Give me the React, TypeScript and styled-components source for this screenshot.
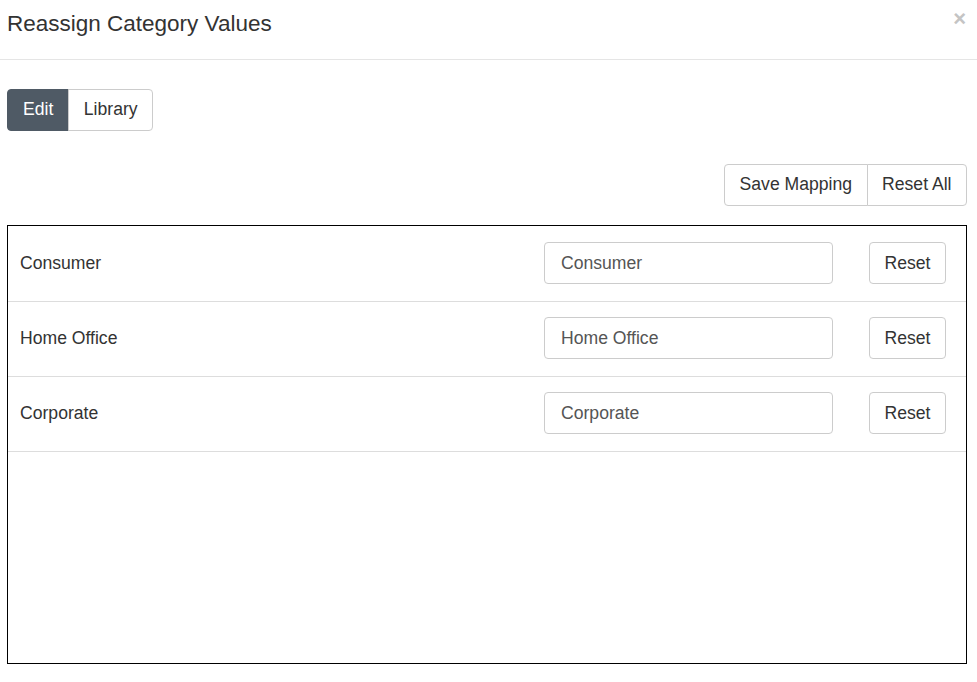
import React from "react";
import styled, { createGlobalStyle } from "styled-components";

const Global = createGlobalStyle`
  html, body { margin: 0; padding: 0; background: #fff; }
  body { font-family: "Liberation Sans", Arial, sans-serif; color: #333; }
  * { box-sizing: border-box; }
`;

const Modal = styled.div`
  width: 977px;
  height: 682px;
  background: #fff;
  display: flex;
  flex-direction: column;
`;

const Header = styled.div`
  height: 60px;
  border-bottom: 1px solid #e5e5e5;
  display: flex;
  align-items: flex-start;
  justify-content: space-between;
  padding: 7px 11px 0 7px;
`;

const Title = styled.h4`
  margin: 0;
  font-size: 22.5px;
  font-weight: 400;
  line-height: 33px;
  color: #333;
`;

const Close = styled.button`
  border: 0;
  background: none;
  padding: 0;
  margin-top: 1px;
  font-family: "Liberation Sans", Arial, sans-serif;
  font-size: 22px;
  font-weight: 700;
  line-height: 22px;
  color: #c4c4c4;
  cursor: pointer;
`;

const Body = styled.div`
  padding: 29px 10px 0 7px;
  display: flex;
  flex-direction: column;
`;

const Group = styled.div<{ $align: string }>`
  display: inline-flex;
  align-self: ${(p) => p.$align};
`;

const GroupButton = styled.button<{ $active?: boolean; $pad: number }>`
  height: 42px;
  padding: 0 ${(p) => p.$pad}px;
  font-family: "Liberation Sans", Arial, sans-serif;
  font-size: 17.6px;
  line-height: 1;
  border: 1px solid ${(p) => (p.$active ? "#4f5a65" : "#ccc")};
  background: ${(p) => (p.$active ? "#4f5a65" : "#fff")};
  color: ${(p) => (p.$active ? "#fff" : "#333")};
  cursor: pointer;
  & + & { margin-left: -1px; }
  &:first-child { border-radius: 4px 0 0 4px; }
  &:last-child { border-radius: 0 4px 4px 0; }
`;

const Toolbar = styled.div`
  margin-top: 33px;
  display: flex;
  justify-content: flex-end;
`;

const TableBox = styled.div`
  margin-top: 19px;
  height: 439px;
  border: 1px solid #000;
  padding-top: 1px;
  display: flex;
  flex-direction: column;
`;

const Row = styled.div`
  height: 75px;
  border-bottom: 1px solid #ddd;
  display: flex;
  align-items: center;
  padding: 0 20px 2px 12px;
`;

const Label = styled.div`
  flex: 1;
  font-size: 17.6px;
  color: #333;
`;

const Input = styled.input`
  width: 289px;
  height: 42px;
  border: 1px solid #ccc;
  border-radius: 4px;
  padding: 0 16px;
  font-family: "Liberation Sans", Arial, sans-serif;
  font-size: 17.6px;
  color: #555;
  outline: none;
`;

const ResetButton = styled.button`
  margin-left: 36px;
  width: 77px;
  height: 42px;
  border: 1px solid #ccc;
  border-radius: 4px;
  background: #fff;
  font-family: "Liberation Sans", Arial, sans-serif;
  font-size: 17.6px;
  color: #333;
  cursor: pointer;
`;

const rows = ["Consumer", "Home Office", "Corporate"];

export default function App() {
  return (
    <>
      <Global />
      <Modal>
        <Header>
          <Title>Reassign Category Values</Title>
          <Close aria-label="Close">×</Close>
        </Header>
        <Body>
          <Group $align="flex-start">
            <GroupButton $active $pad={15}>Edit</GroupButton>
            <GroupButton $pad={14.5}>Library</GroupButton>
          </Group>
          <Toolbar>
            <Group $align="flex-end">
              <GroupButton $pad={14.5}>Save Mapping</GroupButton>
              <GroupButton $pad={14.5}>Reset All</GroupButton>
            </Group>
          </Toolbar>
          <TableBox>
            {rows.map((r) => (
              <Row key={r}>
                <Label>{r}</Label>
                <Input defaultValue={r} />
                <ResetButton>Reset</ResetButton>
              </Row>
            ))}
          </TableBox>
        </Body>
      </Modal>
    </>
  );
}
